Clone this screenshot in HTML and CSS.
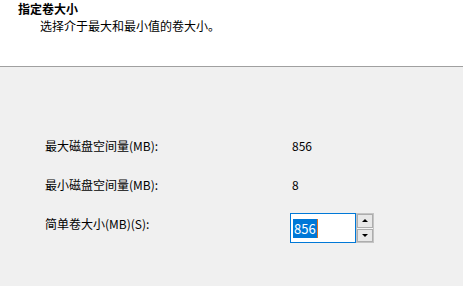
FILE: index.html
```html
<!DOCTYPE html>
<html lang="zh-CN">
<head>
<meta charset="utf-8">
<link rel="stylesheet" href="styles.css">
</head>
<body>
<div class="header">
  <div class="title">指定卷大小</div>
  <div class="subtitle">选择介于最大和最小值的卷大小。</div>
</div>
<div class="content">
  <div class="row">
    <div class="label">最大磁盘空间量(MB):</div>
    <div class="value">856</div>
  </div>
  <div class="row">
    <div class="label">最小磁盘空间量(MB):</div>
    <div class="value">8</div>
  </div>
  <div class="row row-input">
    <div class="label">简单卷大小(MB)(S):</div>
    <div class="spin">
      <div class="edit"><span class="sel">856</span><span class="caret"></span></div>
      <div class="buttons">
        <div class="btn"><span class="tri up"></span></div>
        <div class="btn"><span class="tri down"></span></div>
      </div>
    </div>
  </div>
</div>
</body>
</html>
```
FILE: styles.css
```css
html, body {
  margin: 0;
  padding: 0;
  width: 463px;
  height: 286px;
  overflow: hidden;
  background: #f0f0f0;
  font-family: "Noto Sans CJK SC", "Noto Sans", sans-serif;
  font-size: 12px;
  color: #000;
}
.header {
  background: #fff;
  height: 66px;
  border-bottom: 1px solid #a0a0a0;
  box-sizing: content-box;
}
.title {
  font-weight: bold;
  padding: 1px 0 0 18px;
  line-height: 16px;
}
.subtitle {
  padding: 1px 0 0 40px;
  line-height: 16px;
}
.content {
  padding: 69px 0 0 45px;
  display: flex;
  flex-direction: column;
}
.row {
  display: grid;
  grid-template-columns: 246px auto;
  align-items: center;
  height: 20px;
  margin-bottom: 19px;
}
.row:nth-child(2) { margin-bottom: 18px; }
.row-input {
  align-items: start;
  height: 30px;
}
.row-input .label {
  padding-top: 3px;
  line-height: 16px;
}
.label, .value { line-height: 20px; }
.value { padding-left: 1px; }
.spin {
  display: flex;
  margin-left: -1px;
}
.edit {
  width: 62px;
  height: 28px;
  border: 1px solid #0078d7;
  background: #fff;
  display: flex;
  align-items: center;
  padding-left: 2px;
}
.sel {
  background: #0078d7;
  color: #fff;
  line-height: 19px;
  padding: 0 1px 0 1px;
  font-size: 13px;
}
.caret {
  width: 1px;
  height: 19px;
  background: #e07020;
}
.buttons {
  width: 16px;
  height: 28px;
  border: 1px solid #c4c4c4;
  background: #f5f5f5;
  display: flex;
  flex-direction: column;
  gap: 1px;
  padding: 0;
}
.btn {
  flex: 1;
  border: 1px solid #adadad;
  background: #e8e8e8;
  display: flex;
  align-items: center;
  justify-content: center;
}
.tri {
  width: 0;
  height: 0;
  border-left: 3px solid transparent;
  border-right: 3px solid transparent;
}
.tri.up { border-bottom: 3px solid #000; }
.tri.down { border-top: 3px solid #000; }
```
